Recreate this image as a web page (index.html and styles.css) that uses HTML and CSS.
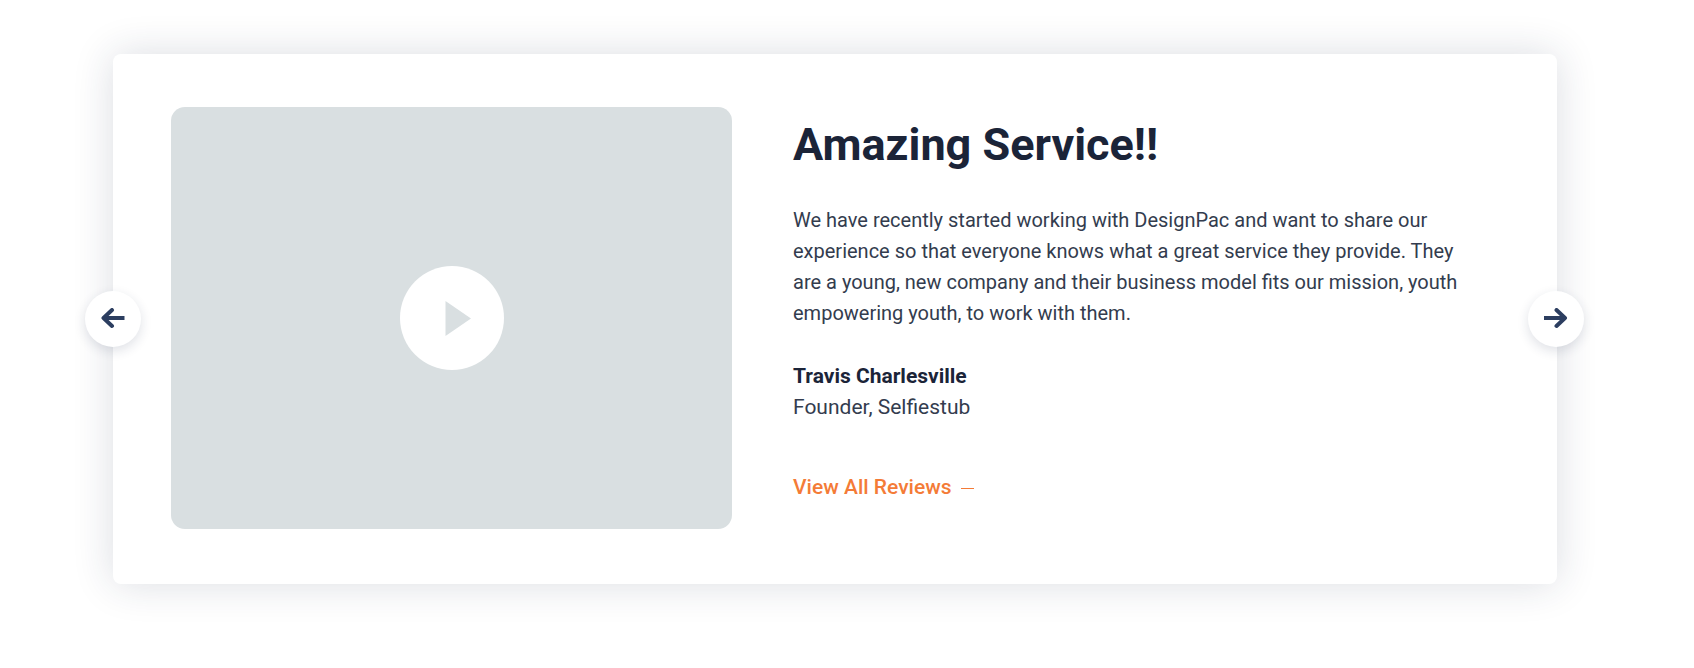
FILE: index.html
```
<!DOCTYPE html>
<html lang="en">
<head>
<meta charset="utf-8">
<meta name="viewport" content="width=device-width, initial-scale=1">
<title>Reviews</title>
<link rel="stylesheet" href="styles.css">
</head>
<body>
<main class="page">
  <section class="card" aria-label="Customer review">
    <div class="media">
      <button class="play" type="button" aria-label="Play video">
        <svg class="play-icon" viewBox="0 0 26 36" aria-hidden="true"><path d="M0.5 1L26 18.5L0.5 36Z" fill="#d9dfe1"/></svg>
      </button>
    </div>
    <div class="review">
      <h1 class="title">Amazing Service!!</h1>
      <p class="quote">We have recently started working with DesignPac and want to share our experience so that everyone knows what a great service they provide. They are a young, new company and their business model fits our mission, youth empowering youth, to work with them.</p>
      <p class="author"><strong class="name">Travis Charlesville</strong><span class="role">Founder, Selfiestub</span></p>
      <a class="more" href="#reviews">View All Reviews<span class="dash" aria-hidden="true"></span></a>
    </div>
    <button class="nav nav-prev" type="button" aria-label="Previous review">
      <svg class="arrow" viewBox="0 0 24 22" aria-hidden="true"><path d="M23.5 10H4"/><path class="head" d="M11 2L2.5 10L11 18"/></svg>
    </button>
    <button class="nav nav-next" type="button" aria-label="Next review">
      <svg class="arrow" viewBox="0 0 24 22" aria-hidden="true"><path d="M0 10H20"/><path class="head" d="M12.5 2L21 10L12.5 18"/></svg>
    </button>
  </section>
</main>
</body>
</html>
```
FILE: styles.css
```
* {
  box-sizing: border-box;
}

body {
  margin: 0;
  background: #fff;
  color: #1b2438;
  font-family: Roboto, "Liberation Sans", sans-serif;
  font-size: 21px;
  line-height: 31px;
}

.page {
  padding: 54px 137px 84px 113px;
}

.card {
  position: relative;
  display: grid;
  grid-template-columns: 561fr 707fr;
  gap: 61px;
  padding: 53px 57px 55px 58px;
  border-radius: 8px;
  background: #fff;
  box-shadow: 0 0 40px rgba(30, 42, 75, 0.16);
}

.media {
  display: flex;
  align-items: center;
  justify-content: center;
  aspect-ratio: 561 / 422;
  border-radius: 14px;
  background: #d9dfe1;
}

.play {
  display: flex;
  align-items: center;
  justify-content: center;
  width: 104px;
  height: 104px;
  padding: 0 0 0 12px;
  border: 0;
  border-radius: 50%;
  background: #fff;
  cursor: pointer;
}

.play-icon {
  width: 26px;
  height: 36px;
}

.review {
  padding-top: 11px;
}

.title {
  margin: 0 0 33px;
  font-size: 45px;
  line-height: 54px;
  font-weight: 700;
}

.quote {
  max-width: 680px;
  margin: 0 0 32px;
  color: #333c4e;
  font-size: 20px;
}

.author {
  display: flex;
  flex-direction: column;
  margin: 0 0 49px;
}

.name {
  font-weight: 700;
}

.role {
  color: #333c4e;
}

.more {
  display: inline-flex;
  align-items: center;
  gap: 9px;
  color: #f47b37;
  font-weight: 500;
  text-decoration: none;
}

.dash {
  width: 13px;
  height: 1px;
  margin-top: 2px;
  background: currentColor;
}

.nav {
  position: absolute;
  top: 50%;
  display: flex;
  align-items: center;
  justify-content: center;
  width: 56px;
  height: 56px;
  padding: 0;
  border: 0;
  border-radius: 50%;
  background: #fff;
  box-shadow: 0 4px 12px rgba(30, 42, 75, 0.14);
  transform: translateY(-50%);
  cursor: pointer;
}

.nav-prev {
  left: -28px;
}

.nav-next {
  right: -27px;
}

.arrow {
  width: 24px;
  height: 22px;
  fill: none;
  stroke: #2c3e60;
  stroke-width: 4;
}

.head {
  stroke-linecap: round;
  stroke-linejoin: round;
}
```
